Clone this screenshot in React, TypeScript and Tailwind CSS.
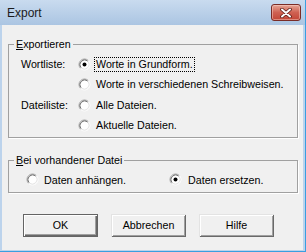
import React from "react";

function Radio({ checked }: { checked?: boolean }) {
  return (
    <svg width="13" height="13" viewBox="0 0 13 13" className="shrink-0">
      <circle cx="6.5" cy="6.5" r="5" fill="#fff" />
      <path d="M2.61 10.39 A5.5 5.5 0 0 1 10.39 2.61" stroke="#a0a0a0" fill="none" />
      <path d="M10.39 2.61 A5.5 5.5 0 0 1 2.61 10.39" stroke="#ffffff" fill="none" />
      <path d="M3.32 9.68 A4.5 4.5 0 0 1 9.68 3.32" stroke="#696969" fill="none" />
      <path d="M9.68 3.32 A4.5 4.5 0 0 1 3.32 9.68" stroke="#e3e3e3" fill="none" />
      {checked && <circle cx="6.5" cy="6.5" r="2" fill="#000" />}
    </svg>
  );
}

function Option({ label, checked, focused }: { label: string; checked?: boolean; focused?: boolean }) {
  return (
    <div className="flex items-center gap-[3px]">
      <Radio checked={checked} />
      <span
        className={
          focused
            ? "border border-dotted border-black px-[1px] leading-[13px]"
            : "border border-transparent px-[1px] leading-[13px]"
        }
      >
        {label}
      </span>
    </div>
  );
}

function Button({ label, primary }: { label: string; primary?: boolean }) {
  return (
    <button
      className={
        primary
          ? "w-[75px] h-[23px] bg-[#f0f0f0] border border-[#646464] shadow-[inset_1px_1px_0_#fff,inset_-1px_-1px_0_#696969,inset_-2px_-2px_0_#a0a0a0] text-[10.7px]"
          : "w-[75px] h-[23px] bg-[#f0f0f0] shadow-[inset_1px_1px_0_#e3e3e3,inset_-1px_-1px_0_#696969,inset_2px_2px_0_#fff,inset_-2px_-2px_0_#a0a0a0] text-[10.7px]"
      }
    >
      {label}
    </button>
  );
}

export default function App() {
  return (
    <div className="w-[306px] h-[252px] flex flex-col bg-[#bcd3ec] border-r border-b border-[#3a9fe0] font-['Liberation_Sans',Arial,sans-serif] text-black">
      {/* title bar */}
      <div className="h-[25px] flex items-center pl-[7px] pr-[4px] bg-gradient-to-b from-[#c9dbef] to-[#abc5e2]">
        <span className="text-[12px] text-[#1b1b1b]">Export</span>
        <div className="ml-auto w-[30px] h-[17px] rounded-[3px] border border-[#7a2c26] bg-gradient-to-b from-[#e4a495] via-[#cf6152] to-[#c24536] flex items-center justify-center shadow-[inset_0_0_0_1px_rgba(255,220,210,0.45)]">
          <svg width="12" height="10" viewBox="0 0 12 10">
            <path d="M2 1.5 L10 8.5 M10 1.5 L2 8.5" stroke="#5a1d18" strokeWidth="3.6" strokeLinecap="round" />
            <path d="M2 1.5 L10 8.5 M10 1.5 L2 8.5" stroke="#fff" strokeWidth="2" strokeLinecap="round" />
          </svg>
        </div>
      </div>

      {/* client area */}
      <div className="flex-1 ml-[2px] mr-[2px] mb-[1px] bg-[#f0f0f0] pl-[6px] pr-[5px] pt-[13px] text-[10.7px]">
        <fieldset className="border border-[#a0a0a0] shadow-[1px_1px_0_#fff]">
          <legend className="ml-[5px] px-[2px] leading-[13px]">
            <span className="underline">E</span>xportieren
          </legend>
          <div className="mt-[3px] pl-[12px] pb-[2px] grid grid-cols-[57px_1fr]">
            <div className="h-[20px] flex items-center">Wortliste:</div>
            <div className="h-[20px] flex items-center">
              <Option label="Worte in Grundform." checked focused />
            </div>
            <div className="h-[20px]" />
            <div className="h-[20px] flex items-center">
              <Option label="Worte in verschiedenen Schreibweisen." />
            </div>
            <div className="h-[20px] mt-[1px] flex items-center">Dateiliste:</div>
            <div className="h-[20px] mt-[1px] flex items-center">
              <Option label="Alle Dateien." />
            </div>
            <div className="h-[20px]" />
            <div className="h-[20px] flex items-center">
              <Option label="Aktuelle Dateien." />
            </div>
          </div>
        </fieldset>

        <fieldset className="mt-[16px] border border-[#a0a0a0] shadow-[1px_1px_0_#fff]">
          <legend className="ml-[5px] px-[2px] leading-[13px]">
            <span className="underline">B</span>ei vorhandener Datei
          </legend>
          <div className="mt-[3px] pb-[2px] pl-[17px] h-[22px] flex items-center">
            <div className="w-[143px] flex items-center gap-[3px]">
              <Radio />
              <span className="px-[1px] border border-transparent">Daten anhängen.</span>
            </div>
            <div className="flex items-center gap-[4px]">
              <Radio checked />
              <span className="px-[1px] border border-transparent">Daten ersetzen.</span>
            </div>
          </div>
        </fieldset>

        <div className="mt-[21px] ml-[15px] flex gap-[13px]">
          <Button label="OK" primary />
          <Button label="Abbrechen" />
          <Button label="Hilfe" />
        </div>
      </div>
    </div>
  );
}
